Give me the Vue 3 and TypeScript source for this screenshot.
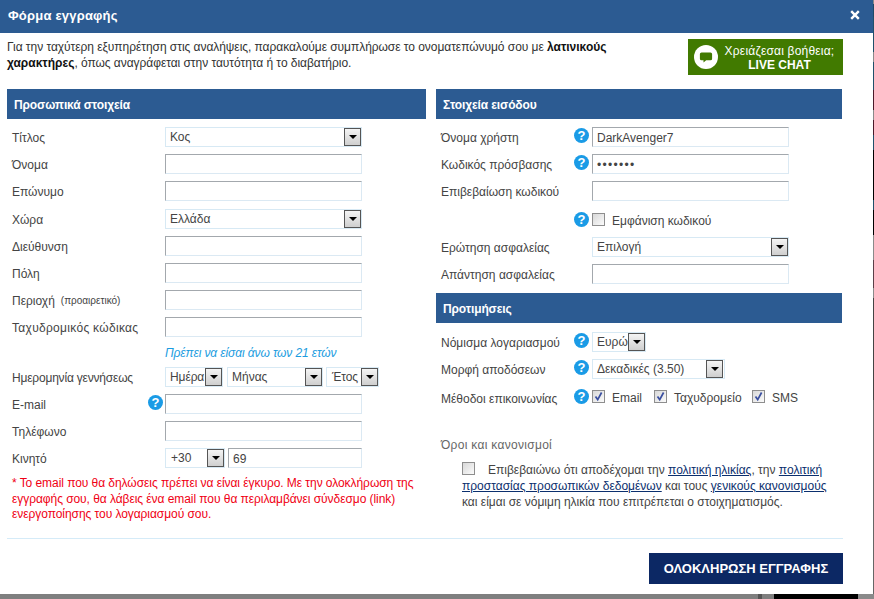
<script setup lang="ts">
type Row =
  | { kind: 'input'; label: string; hint?: string; cls?: string }
  | { kind: 'select'; label: string; value: string; cls?: string };

const upper: Row[] = [
  { kind: 'select', label: 'Τίτλος', value: 'Κος' },
  { kind: 'input', label: 'Όνομα' },
  { kind: 'input', label: 'Επώνυμο' },
  { kind: 'select', label: 'Χώρα', value: 'Ελλάδα' },
  { kind: 'input', label: 'Διεύθυνση' },
  { kind: 'input', label: 'Πόλη' },
  { kind: 'input', label: 'Περιοχή', hint: '(προαιρετικό)' },
  { kind: 'input', label: 'Ταχυδρομικός κώδικας', cls: 'wider' },
];
const dateParts = [
  { text: 'Ημέρα', cls: 'd-day' },
  { text: 'Μήνας', cls: 'd-month' },
  { text: 'Έτος', cls: 'd-year' },
];
const methods = ['Email', 'Ταχυδρομείο', 'SMS'];
</script>

<template>
  <div class="modal">
    <header class="head">
      <h1>Φόρμα εγγραφής</h1>
      <svg class="close" width="10" height="10" viewBox="0 0 10 10" aria-label="Κλείσιμο">
        <path d="M1.2 1.2 8.8 8.8M8.8 1.2 1.2 8.8" stroke="#fff" stroke-width="2.4" fill="none" />
      </svg>
    </header>

    <div class="intro">
      <p>
        Για την ταχύτερη εξυπηρέτηση στις αναλήψεις, παρακαλούμε συμπλήρωσε το ονοματεπώνυμό σου με <b>λατινικούς</b><br /><b>χαρακτήρες</b>, όπως αναγράφεται στην ταυτότητα ή το διαβατήριο.
      </p>
      <a class="chat">
        <svg class="chat-ic" width="24" height="24" viewBox="0 0 24 24">
          <circle cx="12" cy="12" r="12" fill="#fff" />
          <path d="M7.5 7.500h9a1.600 1.600 0 0 1 1.600 1.600v4.600a1.600 1.600 0 0 1-1.600 1.600h-4.300l-2.700 2.200v-2.200H7.500a1.600 1.600 0 0 1-1.600-1.600V9.100a1.600 1.600 0 0 1 1.600-1.600z" fill="#417a00" />
        </svg>
        <span class="chat-txt">Χρειάζεσαι βοήθεια;<b>LIVE CHAT</b></span>
      </a>
    </div>

    <div class="cols">
      <section class="col-left">
        <h2 class="sec">Προσωπικά στοιχεία</h2>
        <div class="rows">
          <div v-for="r in upper" :key="r.label" class="row">
            <label class="lbl" :class="r.cls">{{ r.label }}<small v-if="r.kind === 'input' && r.hint">{{ r.hint }}</small></label>
            <div v-if="r.kind === 'select'" class="sel wide"><span>{{ r.value }}</span><i class="arrow"></i></div>
            <input v-else class="inp" type="text" />
          </div>
          <p class="age">Πρέπει να είσαι άνω των 21 ετών</p>
          <div class="row">
            <label class="lbl narrower">Ημερομηνία γεννήσεως</label>
            <div class="dates">
              <div v-for="d in dateParts" :key="d.text" class="sel" :class="d.cls"><span>{{ d.text }}</span><i class="arrow"></i></div>
            </div>
          </div>
          <div class="row">
            <label class="lbl">E-mail<i class="help">?</i></label>
            <input class="inp" type="text" />
          </div>
          <div class="row">
            <label class="lbl">Τηλέφωνο</label>
            <input class="inp" type="text" />
          </div>
          <div class="row">
            <label class="lbl">Κινητό</label>
            <div class="mobile">
              <div class="sel prefix"><span>+30</span><i class="arrow"></i></div>
              <input class="inp num" type="text" value="69" />
            </div>
          </div>
          <p class="warn">
            * Το email που θα δηλώσεις πρέπει να είναι έγκυρο. Με την ολοκλήρωση της<br />
            εγγραφής σου, θα λάβεις ένα email που θα περιλαμβάνει σύνδεσμο (link)<br />
            ενεργοποίησης του λογαριασμού σου.
          </p>
        </div>
      </section>

      <section class="col-right">
        <h2 class="sec">Στοιχεία εισόδου</h2>
        <div class="rows">
          <div class="row">
            <label class="lbl">Όνομα χρήστη<i class="help">?</i></label>
            <input class="inp" type="text" value="DarkAvenger7" />
          </div>
          <div class="row">
            <label class="lbl">Κωδικός πρόσβασης<i class="help">?</i></label>
            <input class="inp pw" type="password" value="1234567" />
          </div>
          <div class="row">
            <label class="lbl">Επιβεβαίωση κωδικού</label>
            <input class="inp" type="text" />
          </div>
          <div class="row row-show">
            <label class="lbl"><i class="help">?</i></label>
            <span class="cb"></span><span class="cb-text show-text">Εμφάνιση κωδικού</span>
          </div>
          <div class="row">
            <label class="lbl">Ερώτηση ασφαλείας</label>
            <div class="sel wide"><span>Επιλογή</span><i class="arrow"></i></div>
          </div>
          <div class="row">
            <label class="lbl">Απάντηση ασφαλείας</label>
            <input class="inp" type="text" />
          </div>
        </div>

        <h2 class="sec sec-pref">Προτιμήσεις</h2>
        <div class="rows rows-pref">
          <div class="row">
            <label class="lbl">Νόμισμα λογαριασμού<i class="help">?</i></label>
            <div class="sel currency"><span>Ευρώ</span><i class="arrow"></i></div>
          </div>
          <div class="row">
            <label class="lbl">Μορφή αποδόσεων<i class="help">?</i></label>
            <div class="sel odds"><span>Δεκαδικές (3.50)</span><i class="arrow"></i></div>
          </div>
          <div class="row row-methods">
            <label class="lbl">Μέθοδοι επικοινωνίας<i class="help">?</i></label>
            <div class="methods">
              <span v-for="m in methods" :key="m" class="method" :class="'m-' + m.length">
                <span class="cb checked">
                  <svg width="11" height="11" viewBox="0 0 11 11"><path d="M2.500 5.500 4.700 8.600 8.600 1.500" fill="none" stroke="#3a4fa0" stroke-width="1.700" /></svg>
                </span>
                <span class="cb-text">{{ m }}</span>
              </span>
            </div>
          </div>
        </div>

        <div class="terms">
          <h3>Όροι και κανονισμοί</h3>
          <p>
            <span class="cb"></span>Επιβεβαιώνω ότι αποδέχομαι την <a>πολιτική ηλικίας</a>, την <a>πολιτική</a><br /><a>προστασίας προσωπικών δεδομένων</a> και τους <a>γενικούς κανονισμούς</a><br />
            και είμαι σε νόμιμη ηλικία που επιτρέπεται ο στοιχηματισμός.
          </p>
        </div>
      </section>
    </div>

    <footer class="foot">
      <button class="submit" type="button">ΟΛΟΚΛΗΡΩΣΗ ΕΓΓΡΑΦΗΣ</button>
    </footer>
  </div>
</template>

<style>
html, body { margin: 0; height: 100%; overflow: hidden; }
body {
  width: 874px;
  height: 599px;
  background:
    linear-gradient(#555, #555) 758px 594px / 4px 5px no-repeat,
    linear-gradient(#000, #000) 774px 594px / 84px 5px no-repeat,
    linear-gradient(#8a8a8a, #8a8a8a) 858px 594px / 16px 5px no-repeat,
    linear-gradient(
      #8a8a8a 0 4px, #1f4a66 4px 17px, #20506a 17px 52px, #8a8a8a 52px 62px,
      #20506a 62px 90px, #4a1a2a 90px 110px, #8a8a8a 110px 120px, #4a1a2a 120px 135px,
      #20506a 135px 150px, #000 150px 200px, #20506a 200px 210px, #000 210px 235px,
      #8a8a8a 235px 260px, #5a4048 260px 288px, #8a8a8a 288px 298px, #444 298px 400px,
      #666 400px 594px
    ) 873px 0 / 1px 594px no-repeat,
    #7f7f7f;
}
</style>

<style scoped>
.modal {
  width: 873px;
  height: 594px;
  background: #fff;
  display: flex;
  flex-direction: column;
  font: 12px/15px "Liberation Sans", Arial, sans-serif;
  color: #444;
  overflow: hidden;
}
.head {
  height: 33px;
  flex: none;
  background: #2c5b92;
  display: flex;
  align-items: center;
  justify-content: space-between;
  padding: 0 13px 2px 8px;
  box-sizing: border-box;
}
.head h1 { margin: 0; font-size: 13px; font-weight: 700; color: #fff; letter-spacing: .2px; }
.close { margin-top: -1px; }
.intro {
  height: 56px;
  flex: none;
  display: flex;
  padding: 6px 30px 0 7px;
  box-sizing: border-box;
  justify-content: space-between;
}
.intro p { margin: 0; width: 640px; line-height: 16px; color: #333; letter-spacing: -.05px; }
.intro p b { color: #111; letter-spacing: 0; }
.chat {
  width: 155px;
  height: 36px;
  background: #417a00;
  display: flex;
  align-items: center;
  padding-left: 6px;
  box-sizing: border-box;
  color: #fff;
}
.chat-ic { flex: none; }
.chat-txt { flex: 1; text-align: center; line-height: 14px; letter-spacing: .2px; padding: 1px 2px 0 0; }
.chat-txt b { display: block; font-weight: 700; letter-spacing: 0; }

.cols { display: grid; grid-template-columns: 419px 406px; column-gap: 10px; padding-left: 7px; flex: 1; }
.sec {
  margin: 0;
  height: 30px;
  background: #2c5b92;
  color: #fff;
  font-size: 12px;
  font-weight: 700;
  line-height: 32px;
  padding-left: 7px;
  letter-spacing: -.12px;
}
.sec-pref { margin-top: 9.2px; }
.rows { padding: 8px 0 0 5px; }
.rows-pref { padding-top: 8.6px; }
.row { display: flex; height: 20px; margin-bottom: 7.2px; align-items: center; }
.lbl {
  flex: none;
  width: 153px;
  height: 20px;
  box-sizing: border-box;
  padding-top: 2px;
  line-height: 18px;
  display: flex;
  align-items: center;
  white-space: nowrap;
  position: relative;
}
.wider { letter-spacing: .3px; }
.narrower { letter-spacing: -.2px; }
.col-right .lbl { width: 151px; }
.lbl small { font-size: 10px; margin-left: 6px; }
.help {
  position: absolute;
  right: 2px;
  top: 1px;
  width: 15px;
  height: 15px;
  border-radius: 50%;
  background: #1a9be6;
  color: #fff;
  font: 700 13px/15px "Liberation Sans", Arial, sans-serif;
  text-align: center;
}
.col-right .help { right: 3px; }
.inp {
  width: 197px;
  height: 20px;
  box-sizing: border-box;
  border: 1px solid #dbe9f3;
  border-top-color: #a3a8ad;
  border-left-color: #a3a8ad;
  padding: 1px 4px 0;
  margin: 0;
  font: 12px "Liberation Sans", Arial, sans-serif;
  color: #444;
  background: #fff;
  outline: none;
}
.pw { letter-spacing: 1.3px; }
.sel {
  height: 20px;
  box-sizing: border-box;
  border: 1px solid #d7e9f4;
  display: flex;
  align-items: center;
  justify-content: space-between;
  padding: 0 0 0 4px;
  background: #fff;
  white-space: nowrap;
}
.sel span { padding-top: 1px; }
.wide { width: 197px; }
.arrow {
  flex: none;
  width: 17px;
  height: 18px;
  box-sizing: border-box;
  border: 1px solid #555;
  background: linear-gradient(#f4f4f4, #cfcfcf);
  position: relative;
}
.arrow::after {
  content: "";
  position: absolute;
  left: 3.500px;
  top: 6px;
  border: 4px solid transparent;
  border-top: 4px solid #000;
  border-bottom: 0;
}
.dates { display: flex; gap: 4px; }
.d-day { width: 58px; letter-spacing: -.1px; }
.d-month { width: 96px; }
.d-year { width: 53px; padding-left: 5px; margin-left: -1px; letter-spacing: -.1px; }
.mobile { display: flex; gap: 3px; }
.prefix { width: 60px; padding-left: 5px; }
.num { width: 134px; }
.age { margin: 0 0 7.2px 153px; height: 15px; line-height: 17px; font-style: italic; color: #1a9ce0; letter-spacing: -.1px; }
.warn { margin: 8.2px 0 0; color: #f00014; line-height: 15.5px; letter-spacing: -.06px; }
.cb {
  flex: none;
  display: inline-block;
  width: 13px;
  height: 13px;
  box-sizing: border-box;
  border: 1px solid #8e8e8e;
  background: linear-gradient(135deg, #d8d8d8, #fbfbfb);
  position: relative;
}
.cb svg { position: absolute; left: 0; top: 0; }
.cb-text { margin-left: 7px; margin-top: 4px; }
.row-show {
  height: 28px;
  box-sizing: border-box;
  margin-bottom: 0;
  padding-top: 3px;
  align-items: flex-start;
}
.row-show .help { top: 0; }
.row-show .cb { margin-top: 1px; }
.show-text { margin-top: 2px; }
.currency { width: 54px; }
.odds { width: 133px; padding-right: 1px; }
.row-methods { align-items: flex-start; margin-top: 9px; }
.methods { display: flex; padding-top: 1px; }
.method { display: flex; align-items: center; height: 15px; }
.m-5 { width: 62px; }
.m-11 { width: 98px; }

.terms { padding: 23px 0 0 5px; }
.terms h3 { margin: 0 0 9px; font-size: 12px; font-weight: 400; color: #666; letter-spacing: .3px; }
.terms p { margin: 0 0 0 21px; line-height: 16px; }
.terms p .cb { margin-right: 13px; vertical-align: -1px; }
.terms a { color: #0b2f6e; text-decoration: underline; }

.foot {
  flex: none;
  height: 56px;
  margin: 0 30px 0 7px;
  border-top: 1px solid #d5ebf8;
  display: flex;
  justify-content: flex-end;
  padding-top: 14px;
  box-sizing: border-box;
}
.submit {
  width: 194px;
  height: 31px;
  border: 0;
  background: #0c2864;
  color: #fff;
  font: 700 13px "Liberation Sans", Arial, sans-serif;
  padding: 0;
}
</style>
